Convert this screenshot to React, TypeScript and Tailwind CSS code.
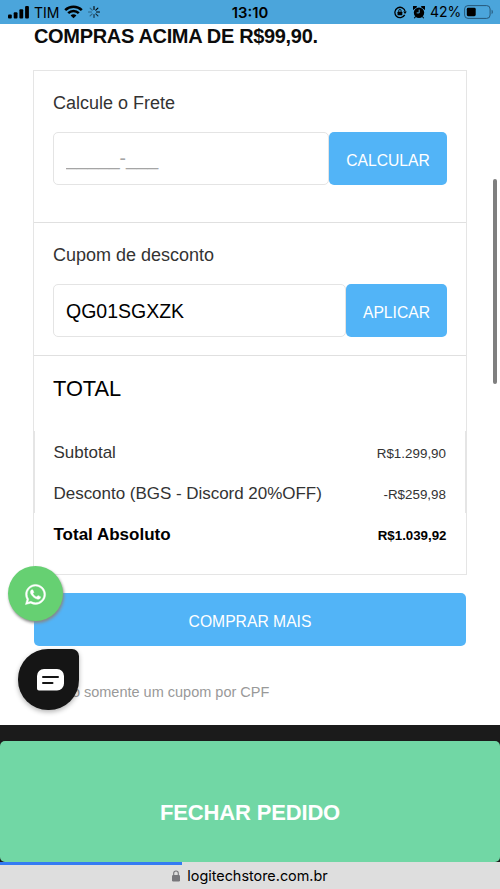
import { useState } from 'react';
import { FaWhatsapp } from 'react-icons/fa';

const helvetica = "font-['Liberation_Sans',Arial,sans-serif]";
const system = "font-[Inter,sans-serif]";

const inputClasses = "h-[53px] min-w-0 flex-1 rounded-[5px] border border-[#e4e4e4] bg-white px-3 outline-none";
const buttonClasses = "h-[53px] shrink-0 rounded-[5px] bg-[#52b4f7] pt-[4px] text-[15.7px] text-white";

function StatusBar() {
  return (
    <header className={`relative flex h-6 shrink-0 items-center justify-between bg-[#4ba5db] pl-2 pr-[6px] text-black ${system}`}>
      <div className="flex items-center">
        <svg width="21" height="13" viewBox="0 0 21 13" fill="black">
          <rect x="0" y="8.5" width="3.8" height="4" rx="1" />
          <rect x="5.7" y="6.2" width="3.8" height="6.3" rx="1" />
          <rect x="11.4" y="3.3" width="3.8" height="9.2" rx="1" />
          <rect x="17.1" y="0" width="3.8" height="12.5" rx="1" />
        </svg>
        <span className="ml-[5px] w-[25px] pt-px text-[14px] leading-6">TIM</span>
        <svg className="ml-[5px]" width="19" height="14" viewBox="0 0 19 14" fill="none" stroke="black">
          <path d="M1.2 5.1C5.8.6 13.2.6 17.8 5.1" strokeWidth="2.6" />
          <path d="M4.2 8.1c3-2.9 7.6-2.9 10.6 0" strokeWidth="2.5" />
          <path d="M9.5 13.3 6.6 10.4c1.6-1.5 4.2-1.5 5.8 0z" fill="black" stroke="none" />
        </svg>
        <svg className="ml-[5px]" width="12" height="12" viewBox="0 0 12 12" stroke="black" strokeWidth="1.1" strokeLinecap="round">
          <path d="M6 .5v3M9.9 2.1 7.8 4.2M8.5 6h3" />
          <path d="M7.8 7.8l2.1 2.1M6 8.5v3" opacity=".75" />
          <path d="M4.2 7.8 2.1 9.9M.5 6h3M2.1 2.1l2.1 2.1" opacity=".4" />
        </svg>
      </div>

      <span className="absolute left-1/2 top-0 w-[60px] -translate-x-1/2 text-center text-[14.8px] font-semibold leading-[26px]">13:10</span>

      <div className="flex items-center">
        <svg width="13" height="13" viewBox="0 0 13 12" fill="none" stroke="black" strokeWidth="1.3">
          <path d="M10.7 8.4A5.2 5.2 0 1 1 11.2 5" />
          <path d="M9.2 5h3.6l-1.8 2.5z" fill="black" stroke="none" />
          <rect x="3.5" y="5.2" width="4.8" height="3.6" rx=".5" fill="black" stroke="none" />
          <path d="M4.7 5.4V4.2a1.2 1.2 0 0 1 2.4 0v1.2" strokeWidth=".9" />
        </svg>
        <svg className="ml-[6px]" width="12" height="13" viewBox="0 0 12 13">
          <circle cx="6" cy="6.8" r="5.2" />
          <path d="M.2 3.3A2 2 0 0 1 3.4.8zM11.8 3.3A2 2 0 0 0 8.6.8zM2.6 10.5l-1.3 1.8M9.4 10.5l1.3 1.8" stroke="black" strokeWidth="1.1" />
          <path d="M6.2 3.6v3.3H3.7" fill="none" stroke="#4ba5db" strokeWidth="1" />
        </svg>
        <span className="ml-[5px] w-[30px] whitespace-nowrap text-[14px] leading-[26px]">42%</span>
        <svg className="ml-[4px]" width="30" height="14" viewBox="0 0 30 14">
          <rect x=".6" y=".6" width="25.5" height="12.8" rx="3.4" fill="none" stroke="#27587a" strokeWidth="1" />
          <rect x="2.8" y="2.8" width="8.9" height="8.4" rx="1.4" />
          <path d="M27.6 4.8c1.6.6 1.6 3.8 0 4.4z" fill="#27587a" />
        </svg>
      </div>
    </header>
  );
}

export default function App() {
  const [zip, setZip] = useState('');
  const [coupon, setCoupon] = useState('QG01SGXZK');

  return (
    <div className={`relative flex h-[889px] w-[500px] flex-col overflow-hidden bg-white text-[#333] ${helvetica}`}>
      <StatusBar />

      <main className="h-[701px] shrink-0 px-[33px]">
        <h1 className="h-[46px] whitespace-nowrap pl-px text-[20px] font-bold leading-[24px] tracking-[-0.33px] text-[#0c0c0c]">
          COMPRAS ACIMA DE R$99,90.
        </h1>

        <section className="h-[505px] w-[434px] border border-[#e5e5e5]">
          <div className="h-[152px] border-b border-[#e0e0e0] px-[19px] pt-[20px]">
            <h2 className="text-[18px] leading-6">Calcule o Frete</h2>
            <div className="mt-[17px] flex">
              <input
                value={zip}
                onChange={(e) => setZip(e.target.value)}
                placeholder="_____-___"
                className={`${inputClasses} pt-px text-[19.3px] placeholder:text-[#a5a5a5]`}
              />
              <button className={`${buttonClasses} w-[118px]`}>CALCULAR</button>
            </div>
          </div>

          <div className="h-[133px] border-b border-[#e0e0e0] px-[19px] pt-[20px]">
            <h2 className="text-[18px] leading-6">Cupom de desconto</h2>
            <div className="mt-[17px] flex">
              <input
                value={coupon}
                onChange={(e) => setCoupon(e.target.value)}
                className={`${inputClasses} pt-[2px] text-[19.5px] text-black`}
              />
              <button className={`${buttonClasses} w-[101px]`}>APLICAR</button>
            </div>
          </div>

          <h2 className="h-[75px] pl-[19px] pt-[19px] text-[21.8px] leading-7 text-black">TOTAL</h2>

          <div className="h-[82px] border-x border-[#e5e5e5] pl-[18.5px] pr-[19px] leading-[43px]">
            <div className="flex h-[41px] justify-between">
              <span className="text-[17px]">Subtotal</span>
              <span className="pt-px text-[13.4px]">R$1.299,90</span>
            </div>
            <div className="flex h-[41px] justify-between">
              <span className="text-[17px] tracking-[-0.03px]">Desconto (BGS - Discord 20%OFF)</span>
              <span className="pt-px text-[13.4px]">-R$259,98</span>
            </div>
          </div>
          <div className="flex h-[41px] justify-between px-[19.5px] font-bold leading-[43px] text-black">
            <span className="text-[17px]">Total Absoluto</span>
            <span className="pt-px text-[13.3px]">R$1.039,92</span>
          </div>
        </section>

        <button className={`${buttonClasses} ml-px mt-[18px] w-[432px]`}>COMPRAR MAIS</button>
        <p className="mt-[36px] whitespace-nowrap pl-px text-[14.5px] leading-5 text-[#999]">*Válido somente um cupom por CPF</p>
      </main>

      <footer className="flex h-[137px] shrink-0 flex-col bg-[#1b1b1b] pt-4">
        <button className="h-[121px] w-full rounded-[5px] bg-[#71d7a5] pt-[21px] text-[22px] font-bold tracking-[-0.15px] text-white">
          FECHAR PEDIDO
        </button>
      </footer>

      <div className={`relative flex h-[27px] shrink-0 items-center justify-center bg-[#dedede] text-[14.4px] text-black ${system}`}>
        <div className="absolute left-0 top-0 h-[3px] w-[182px] bg-[#347bf3]" />
        <svg className="mr-[7px]" width="8" height="12" viewBox="0 0 8 12" fill="#77777b">
          <rect y="5" width="8" height="6.5" rx="1.2" />
          <path d="M1.7 5.5V3.3a2.3 2.3 0 0 1 4.6 0v2.2" fill="none" stroke="#77777b" strokeWidth="1.1" />
        </svg>
        <span className="whitespace-nowrap">logitechstore.com.br</span>
      </div>

      {/* Scroll indicator */}
      <div className="absolute left-[492.5px] top-[179px] h-[205px] w-1 rounded-full bg-[#7f7f7f]" />

      {/* Floating contact buttons */}
      <button className="absolute left-2 top-[566px] flex size-[55px] items-center justify-center rounded-full bg-[#66d072] pt-[2px] text-white shadow-[1px_2px_3px_#888]">
        <FaWhatsapp size={23} stroke="white" strokeWidth={10} />
      </button>
      <button className="absolute left-[18px] top-[649px] flex h-[61px] w-[61px] items-center justify-center rounded-[30px] rounded-tr-[7px] bg-[#151515] shadow-[0_2px_5px_rgba(0,0,0,0.3)]">
        <svg className="ml-1" width="27" height="22" viewBox="0 0 27 22">
          <path d="M7 0h13a7 7 0 0 1 7 7v7.5a7 7 0 0 1-7 7H2a2 2 0 0 1-2-2V7a7 7 0 0 1 7-7z" fill="white" />
          <path d="M6 8h15M6 14h9.5" stroke="#151515" strokeWidth="2" strokeLinecap="round" />
        </svg>
      </button>
    </div>
  );
}
